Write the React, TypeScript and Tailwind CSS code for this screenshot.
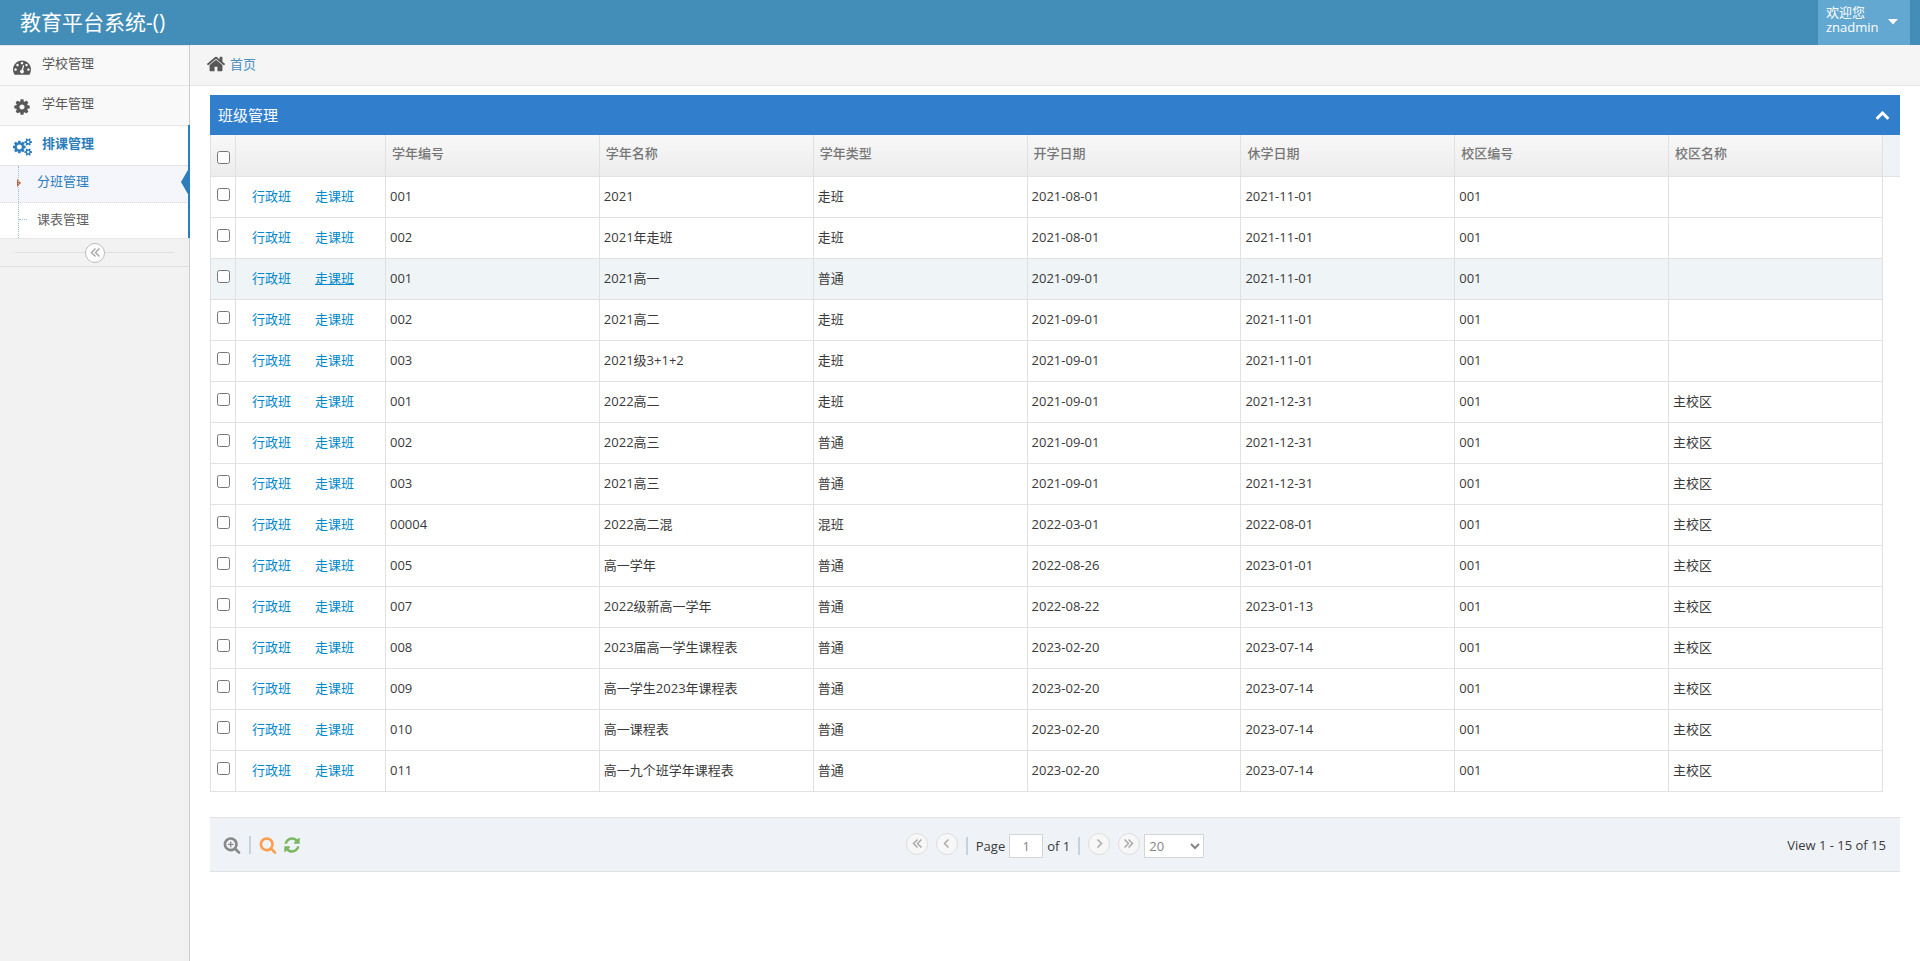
import type { ReactNode } from "react";

const iconPaths = {
  home: "M1472 992v480q0 26-19 45t-45 19h-384v-384h-256v384h-384q-26 0-45-19t-19-45v-480q0-1 .5-3t.5-3l575-474 575 474q1 2 1 6zm223-69l-62 74q-8 9-21 11h-3q-13 0-21-7l-692-577-692 577q-12 8-24 7-13-2-21-11l-62-74q-8-10-7-23.5t11-21.5l719-599q32-26 76-26t76 26l244 204v-195q0-14 9-23t23-9h192q14 0 23 9t9 23v408l219 182q10 8 11 21.5t-7 23.5z",
  cog: "M1152 896q0-106-75-181t-181-75-181 75-75 181 75 181 181 75 181-75 75-181zm512-109v222q0 12-8 23t-20 13l-185 28q-19 54-39 91 35 50 107 138 10 12 10 25t-9 23q-27 37-99 108t-94 71q-12 0-26-9l-138-108q-44 23-91 38-16 136-29 186-7 28-36 28h-222q-14 0-24.5-8.5t-11.5-21.5l-28-184q-49-16-90-37l-141 107q-10 9-25 9-14 0-25-11-126-114-165-168-7-10-7-23 0-12 8-23 15-21 51-66.5t54-70.5q-27-50-41-99l-183-27q-13-2-21-12.5t-8-23.5v-222q0-12 8-23t19-13l186-28q14-46 39-92-40-57-107-138-10-12-10-24 0-10 9-23 26-36 98.5-107.5t94.5-71.5q13 0 26 10l138 107q44-23 91-38 16-136 29-186 7-28 36-28h222q14 0 24.5 8.5t11.5 21.5l28 184q49 16 90 37l142-107q9-9 24-9 13 0 25 10 129 119 165 170 7 8 7 22 0 12-8 23-15 21-51 66.5t-54 70.5q26 50 41 98l183 28q13 2 21 12.5t8 23.5z",
  dashboard: "M384 1152q0-53-37.5-90.5t-90.5-37.5-90.5 37.5-37.5 90.5 37.5 90.5 90.5 37.5 90.5-37.5 37.5-90.5zm192-448q0-53-37.5-90.5t-90.5-37.5-90.5 37.5-37.5 90.5 37.5 90.5 90.5 37.5 90.5-37.5 37.5-90.5zm428 481l101-382q6-26-7.5-48.5t-38.5-29.5-48 6.5-30 39.5l-101 382q-60 5-107 43.5t-63 98.5q-20 77 20 146t117 89 146-20 89-117q16-60-6-117t-72-91zm660-33q0-53-37.5-90.5t-90.5-37.5-90.5 37.5-37.5 90.5 37.5 90.5 90.5 37.5 90.5-37.5 37.5-90.5zm-640-640q0-53-37.5-90.5t-90.5-37.5-90.5 37.5-37.5 90.5 37.5 90.5 90.5 37.5 90.5-37.5 37.5-90.5zm448 192q0-53-37.5-90.5t-90.5-37.5-90.5 37.5-37.5 90.5 37.5 90.5 90.5 37.5 90.5-37.5 37.5-90.5zm320 448q0 261-141 483-19 29-54 29h-1402q-35 0-54-29-141-221-141-483 0-182 71-348t191-286 286-191 348-71 348 71 286 191 191 286 71 348z",
  search: "M1216 832q0-185-131.5-316.5t-316.5-131.5-316.5 131.5-131.5 316.5 131.5 316.5 316.5 131.5 316.5-131.5 131.5-316.5zm512 832q0 52-38 90t-90 38q-54 0-90-38l-343-342q-179 124-399 124-143 0-273.5-55.5t-225-150-150-225-55.5-273.5 55.5-273.5 150-225 225-150 273.5-55.5 273.5 55.5 225 150 150 225 55.5 273.5q0 220-124 399l343 343q37 37 37 90z",
  refresh: "M1639 1056q0 5-1 7-64 268-268 434.5t-478 166.5q-146 0-282.5-55t-243.5-157l-129 129q-19 19-45 19t-45-19-19-45v-448q0-26 19-45t45-19h448q26 0 45 19t19 45-19 45l-137 137q71 66 161 102t187 36q134 0 250-65t186-179q11-17 53-117 8-23 30-23h192q13 0 22.5 9.5t9.5 22.5zm25-800v448q0 26-19 45t-45 19h-448q-26 0-45-19t-19-45 19-45l138-138q-148-137-349-137-134 0-250 65t-186 179q-11 17-53 117-8 23-30 23h-199q-13 0-22.5-9.5t-9.5-22.5v-7q65-268 270-434.5t480-166.5q146 0 284 55.5t245 156.5l130-129q19-19 45-19t45 19 19 45z",
  chevronUp: "M1683 1331l-166 165q-19 19-45 19t-45-19l-531-531-531 531q-19 19-45 19t-45-19l-166-165q-19-19-19-45.5t19-45.5l742-741q19-19 45-19t45 19l742 741q19 19 19 45.5t-19 45.5z",
};

const plusPath = "M1056 790v84q0 22-22 22h-202v202q0 22-22 22h-84q-22 0-22-22v-202h-202q-22 0-22-22v-84q0-22 22-22h202v-202q0-22 22-22h84q22 0 22 22v202h202q22 0 22 22z";

const cogsPath = "M896 896q0-106-75-181t-181-75-181 75-75 181 75 181 181 75 181-75 75-181zm768 512q0-52-38-90t-90-38-90 38-38 90q0 53 37.5 90.5t90.5 37.5 90.5-37.5 37.5-90.5zm0-1024q0-52-38-90t-90-38-90 38-38 90q0 53 37.5 90.5t90.5 37.5 90.5-37.5 37.5-90.5zm-384 421v185q0 10-7 19.5t-16 10.5l-155 24q-11 35-32 76 34 48 90 115 7 11 7 20 0 12-7 19-23 30-82.5 89.5t-78.5 59.5q-11 0-21-7l-115-90q-37 19-77 31-11 108-23 155-7 24-30 24h-186q-11 0-20-7.5t-10-17.5l-23-153q-34-10-75-31l-118 89q-7 7-20 7-11 0-21-8-144-133-144-160 0-9 7-19 10-14 41-53t47-61q-23-44-35-82l-152-24q-10-1-17-9.5t-7-19.5v-185q0-10 7-19.5t16-10.5l155-24q11-35 32-76-34-48-90-115-7-11-7-20 0-12 7-20 22-30 82-89t79-59q11 0 21 7l115 90q34-18 77-32 11-108 23-154 7-24 30-24h186q11 0 20 7.5t10 17.5l23 153q34 10 75 31l118-89q8-7 20-7 11 0 21 8 144 133 144 160 0 8-7 19-12 16-42 54t-45 60q23 48 34 82l152 23q10 2 17 10.5t7 19.5zm640 533v140q0 16-149 31-12 27-30 52 51 113 51 138 0 4-4 7-122 71-124 71-8 0-46-47t-52-68q-20 2-30 2t-30-2q-14 21-52 68t-46 47q-2 0-124-71-4-3-4-7 0-25 51-138-18-25-30-52-149-15-149-31v-140q0-16 149-31 13-29 30-52-51-113-51-138 0-4 4-7 4-2 35-20t59-34 30-16q8 0 46 46.5t52 67.5q20-2 30-2t30 2q51-71 92-112l6-2q4 0 124 70 4 3 4 7 0 25-51 138 17 23 30 52 149 15 149 31zm0-1024v140q0 16-149 31-12 27-30 52 51 113 51 138 0 4-4 7-122 71-124 71-8 0-46-47t-52-68q-20 2-30 2t-30-2q-14 21-52 68t-46 47q-2 0-124-71-4-3-4-7 0-25 51-138-18-25-30-52-149-15-149-31v-140q0-16 149-31 13-29 30-52-51-113-51-138 0-4 4-7 4-2 35-20t59-34 30-16q8 0 46 46.5t52 67.5q20-2 30-2t30 2q51-71 92-112l6-2q4 0 124 70 4 3 4 7 0 25-51 138 17 23 30 52 149 15 149 31z";

function Icon({ name, plus = false, className }: { name: keyof typeof iconPaths; plus?: boolean; className: string }) {
  return (
    <svg viewBox="0 0 1792 1792" fill="currentColor" aria-hidden="true" className={`shrink-0 ${className}`}>
      <path d={iconPaths[name]} />
      {plus && <path d={plusPath} />}
    </svg>
  );
}

function CogsIcon() {
  return (
    <svg viewBox="0 0 1920 1792" fill="currentColor" aria-hidden="true" className="shrink-0 w-[19px] h-[18px]">
      <path d={cogsPath} />
    </svg>
  );
}

const anglePaths = {
  first: "M6.5 1.5 2.5 5.5l4 4M10.5 1.5l-4 4 4 4",
  prev: "M7.5 1.5 3.5 5.5l4 4",
  next: "M4.5 1.5l4 4-4 4",
  last: "M1.5 1.5l4 4-4 4M5.5 1.5l4 4-4 4",
};

function Angle({ name }: { name: keyof typeof anglePaths }) {
  return (
    <svg viewBox="0 0 12 11" fill="none" stroke="currentColor" strokeWidth="1.5" aria-hidden="true" className="w-3 h-[11px]">
      <path d={anglePaths[name]} />
    </svg>
  );
}

const columns = ["学年编号", "学年名称", "学年类型", "开学日期", "休学日期", "校区编号", "校区名称"];

const rows = [
  ["001", "2021", "走班", "2021-08-01", "2021-11-01", "001", ""],
  ["002", "2021年走班", "走班", "2021-08-01", "2021-11-01", "001", ""],
  ["001", "2021高一", "普通", "2021-09-01", "2021-11-01", "001", ""],
  ["002", "2021高二", "走班", "2021-09-01", "2021-11-01", "001", ""],
  ["003", "2021级3+1+2", "走班", "2021-09-01", "2021-11-01", "001", ""],
  ["001", "2022高二", "走班", "2021-09-01", "2021-12-31", "001", "主校区"],
  ["002", "2022高三", "普通", "2021-09-01", "2021-12-31", "001", "主校区"],
  ["003", "2021高三", "普通", "2021-09-01", "2021-12-31", "001", "主校区"],
  ["00004", "2022高二混", "混班", "2022-03-01", "2022-08-01", "001", "主校区"],
  ["005", "高一学年", "普通", "2022-08-26", "2023-01-01", "001", "主校区"],
  ["007", "2022级新高一学年", "普通", "2022-08-22", "2023-01-13", "001", "主校区"],
  ["008", "2023届高一学生课程表", "普通", "2023-02-20", "2023-07-14", "001", "主校区"],
  ["009", "高一学生2023年课程表", "普通", "2023-02-20", "2023-07-14", "001", "主校区"],
  ["010", "高一课程表", "普通", "2023-02-20", "2023-07-14", "001", "主校区"],
  ["011", "高一九个班学年课程表", "普通", "2023-02-20", "2023-07-14", "001", "主校区"],
];

const activeRow = 2;

function Header() {
  return (
    <header className="h-[45px] bg-[#438eb9] text-white flex justify-between pr-2.5">
      <a href="#" className="flex items-center pl-5 pb-0.5 text-[21px] leading-6">教育平台系统-()</a>
      <button className="w-[92px] bg-[#62a8d1] flex items-center justify-between pl-2 pr-3 pb-0.5 text-left text-[13px] leading-[15px]">
        <span className="pb-1">
          欢迎您<br />znadmin
        </span>
        <svg viewBox="0 0 10 6" fill="currentColor" aria-hidden="true" className="w-2.5 h-1.5">
          <path d="M0 0h10L5 5.5z" />
        </svg>
      </button>
    </header>
  );
}

function NavItem({ icon, label, active = false }: { icon: ReactNode; label: string; active?: boolean }) {
  return (
    <a
      href="#"
      className={`h-10 flex items-center border-b border-[#e5e5e5] pl-[7px] ${
        active ? "bg-white text-[#2b7dbc] font-bold" : "bg-[#f9f9f9] text-[#585858]"
      }`}
    >
      <span className="w-[30px] mr-[5px] pt-0.5 flex justify-center">{icon}</span>
      <span className="pb-1.5 leading-4">{label}</span>
    </a>
  );
}

function Sidebar() {
  return (
    <aside className="w-[190px] shrink-0 bg-[#f2f2f2] border-r border-[#ccc]">
      <nav className="border-t border-[#e5e5e5]">
        <NavItem icon={<Icon name="dashboard" className="size-[18px]" />} label="学校管理" />
        <NavItem icon={<Icon name="cog" className="size-[18px]" />} label="学年管理" />
        <div className="relative">
          <NavItem icon={<CogsIcon />} label="排课管理" active />
          <ul className="relative bg-white border-b border-[#e5e5e5]">
            <li className="relative">
              <a href="#" className="h-[37px] flex items-center pl-[37px] pb-1.5 bg-[#f4f6fb] border-b border-dotted border-[#d5d9e0] text-[#2b7dbc]">
                分班管理
              </a>
              <svg viewBox="0 0 4 8" aria-hidden="true" className="absolute left-[17px] top-[13px] w-1 h-2">
                <path d="M0 0v8l4-4z" fill="#c86139" />
              </svg>
              <svg viewBox="0 0 8 28" aria-hidden="true" className="absolute right-0 top-[2px] w-2 h-7">
                <path d="M8 0v28L0 14z" fill="#2b7dbc" />
              </svg>
            </li>
            <li className="relative">
              <a href="#" className="h-[35px] flex items-center pl-[37px] pb-1 text-[#616161]">课表管理</a>
              <span className="absolute left-[19px] top-4 w-2 border-t border-dotted border-[#9dbdd6]" />
            </li>
            <li aria-hidden="true" className="absolute left-[18px] top-0 bottom-0 border-l border-dotted border-[#9dbdd6]" />
          </ul>
          <span className="absolute -right-px -top-px bottom-px w-0.5 bg-[#2b7dbc]" />
        </div>
      </nav>
      <div className="h-7 flex items-center px-[15px] border-b border-[#e0e0e0]">
        <span className="flex-1 border-t border-[#e0e0e0]" />
        <button aria-label="收起菜单" className="size-5 rounded-full border border-[#bbb] bg-white text-[#aaa] flex items-center justify-center">
          <Angle name="first" />
        </button>
        <span className="flex-1 border-t border-[#e0e0e0]" />
      </div>
    </aside>
  );
}

function ClassTable() {
  return (
    <div className="pr-[17px] bg-[linear-gradient(#eff3f8_41px,#e1e1e1_41px)] bg-no-repeat bg-[length:100%_42px]">
      <table className="w-full table-fixed border-separate border-spacing-0 bg-white text-left">
        <colgroup>
          <col className="w-[26px]" />
          <col className="w-[150px]" />
          {columns.map((column) => <col key={column} />)}
        </colgroup>
        <thead>
          <tr className="h-[42px] bg-linear-to-b from-[#f8f8f8] to-[#ececec] text-[#777]">
            <th className="border-x border-b border-[#e1e1e1] pt-1">
              <input type="checkbox" aria-label="全选" className="block mx-auto size-[13px]" />
            </th>
            <th className="border-r border-b border-[#e1e1e1]" />
            {columns.map((column) => (
              <th key={column} className="border-r border-b border-[#e1e1e1] pl-1.5 pb-1.5 font-medium">{column}</th>
            ))}
          </tr>
        </thead>
        <tbody>
          {rows.map((row, index) => (
            <tr key={index} className={`h-[41px] ${index === activeRow ? "bg-[#eff4f7]" : "bg-white"}`}>
              <td className="border-x border-b border-[#e1e1e1] pb-1.5">
                <input type="checkbox" aria-label={`选择 ${row[1]}`} className="block mx-auto size-[13px]" />
              </td>
              <td className="border-r border-b border-[#e1e1e1] pl-4 pb-0.5">
                <div className="flex gap-6 text-[#08c]">
                  <a href="#">行政班</a>
                  <a href="#" className={index === activeRow ? "underline" : ""}>走课班</a>
                </div>
              </td>
              {row.map((cell, i) => (
                <td key={i} className="border-r border-b border-[#e1e1e1] pl-1 pb-0.5">{cell}</td>
              ))}
            </tr>
          ))}
        </tbody>
      </table>
    </div>
  );
}

function PageButton({ name, label }: { name: keyof typeof anglePaths; label: string }) {
  return (
    <button aria-label={label} className="size-[22px] mb-1 rounded-full border border-[#ddd] bg-[#f7f7f7] text-[#aaa] flex items-center justify-center">
      <Angle name={name} />
    </button>
  );
}

function Separator() {
  return <span className="w-0.5 h-[18px] bg-[#c5d3dc]" />;
}

function Pager() {
  return (
    <div className="mt-[25px] h-[55px] grid grid-cols-[1fr_auto_1fr] items-center bg-[#eff3f8] border-y border-[#e1e1e1]">
      <div className="flex items-center pl-[13px]">
        <button aria-label="查看" className="text-[#888]"><Icon name="search" plus className="size-[18px]" /></button>
        <span className="mx-2 flex"><Separator /></span>
        <button aria-label="搜索" className="text-[#fe9e4b]"><Icon name="search" className="size-[18px]" /></button>
        <button aria-label="刷新" className="ml-1.5 text-[#7bb661]"><Icon name="refresh" className="size-[18px]" /></button>
      </div>
      <div className="flex items-center gap-1 pt-0.5">
        <div className="flex items-center gap-2">
          <PageButton name="first" label="首页" />
          <PageButton name="prev" label="上一页" />
          <Separator />
          <label className="flex items-center gap-1">
            Page
            <input type="text" defaultValue="1" className="w-[34px] h-6 bg-white border border-[#d5d5d5] text-center text-[#858585]" />
            of 1
          </label>
          <Separator />
          <PageButton name="next" label="下一页" />
          <PageButton name="last" label="末页" />
        </div>
        <select aria-label="每页条数" defaultValue="20" className="w-[60px] h-6 bg-white border border-[#d5d5d5] text-[#858585]">
          <option>20</option>
          <option>50</option>
          <option>100</option>
        </select>
      </div>
      <div className="pr-3.5 text-right">View 1 - 15 of 15</div>
    </div>
  );
}

export default function App() {
  return (
    <div className="min-h-screen flex flex-col bg-white text-[#393939] text-[13px] leading-5 font-['Open_Sans','Noto_Sans_CJK_SC',sans-serif]">
      <Header />
      <div className="flex-1 flex">
        <Sidebar />
        <main className="flex-1 min-w-0">
          <div className="h-[41px] flex items-center pl-4 pb-0.5 bg-[#f5f5f5] border-b border-[#e5e5e5]">
            <Icon name="home" className="size-5 text-[#585858]" />
            <a href="#" className="ml-1 text-[#4c8fbd]">首页</a>
          </div>
          <section className="px-5 pt-[9px]">
            <div className="h-10 flex items-center justify-between pl-2 pr-2.5 bg-[#307ecc] text-white">
              <h1 className="text-[15px]">班级管理</h1>
              <button aria-label="收起" className="pb-0.5"><Icon name="chevronUp" className="size-[15px]" /></button>
            </div>
            <ClassTable />
            <Pager />
          </section>
        </main>
      </div>
    </div>
  );
}
